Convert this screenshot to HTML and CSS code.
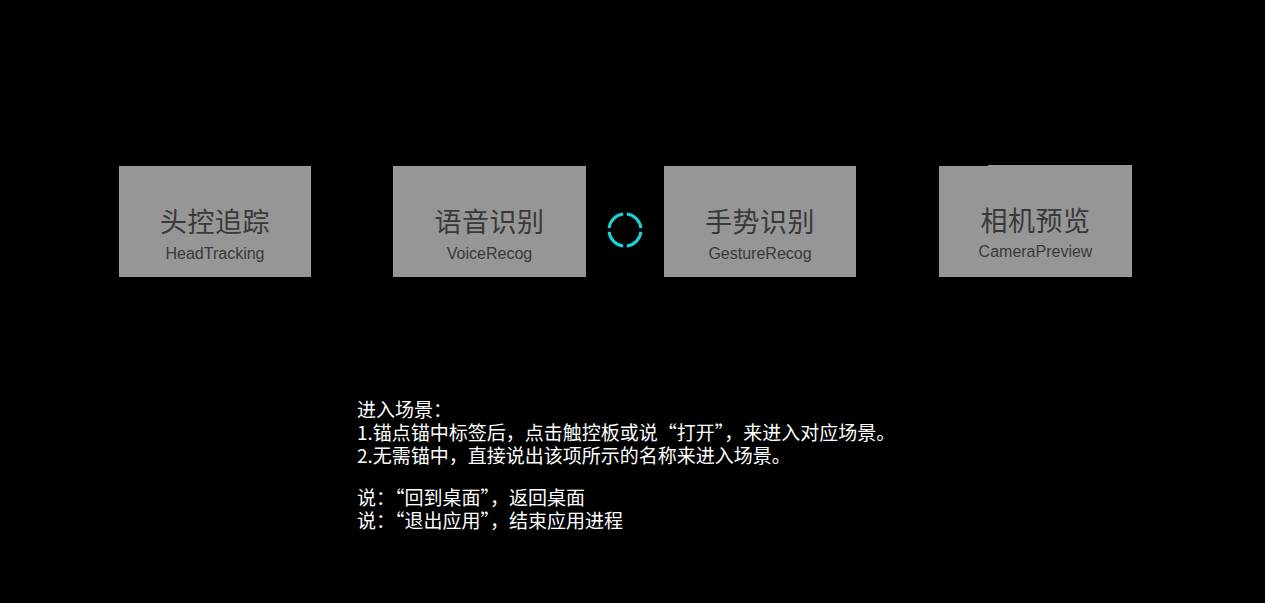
FILE: index.html
```html
<!DOCTYPE html>
<html lang="zh-CN">
<head>
<meta charset="utf-8">
<title>Scenes</title>
<link rel="stylesheet" href="styles.css">
</head>
<body>
<main class="stage">
  <section class="cards">
    <div class="card card-1">
      <div class="card-title">头控追踪</div>
      <div class="card-sub">HeadTracking</div>
    </div>
    <div class="card card-2">
      <div class="card-title">语音识别</div>
      <div class="card-sub">VoiceRecog</div>
    </div>
    <div class="card card-3">
      <div class="card-title">手势识别</div>
      <div class="card-sub">GestureRecog</div>
    </div>
    <div class="card card-4">
      <div class="card-title">相机预览</div>
      <div class="card-sub">CameraPreview</div>
    </div>
  </section>

  <svg class="reticle" width="36" height="36" viewBox="0 0 36 36" aria-hidden="true">
    <g fill="none" stroke="#1ad2d8" stroke-width="3">
      <path d="M19.8 2.1 A16 16 0 0 1 33.9 16.2"/>
      <path d="M33.9 19.8 A16 16 0 0 1 19.8 33.9"/>
      <path d="M16.2 33.9 A16 16 0 0 1 2.1 19.8"/>
      <path d="M2.1 16.2 A16 16 0 0 1 16.2 2.1"/>
    </g>
  </svg>

  <section class="help">
    <p>进入场景：</p>
    <p>1.锚点锚中标签后，点击触控板或说“打开”，来进入对应场景。</p>
    <p>2.无需锚中，直接说出该项所示的名称来进入场景。</p>
    <div class="blank"></div>
    <p>说：“回到桌面”，返回桌面</p>
    <p>说：“退出应用”，结束应用进程</p>
  </section>
</main>
</body>
</html>
```

FILE: styles.css
```css
html, body {
  margin: 0;
  padding: 0;
  background: #000;
}

body {
  width: 1265px;
  height: 603px;
  overflow: hidden;
  font-family: "Liberation Sans", "Noto Sans CJK SC", sans-serif;
}

.stage {
  position: relative;
  width: 1265px;
  height: 603px;
  padding-top: 166px;
  box-sizing: border-box;
}

.cards {
  display: grid;
  grid-template-columns: 192px 82px 193px 78px 192px 83px 193px;
  align-items: start;
  padding-left: 119px;
}

.card-1 { grid-column: 1; }
.card-2 { grid-column: 3; }
.card-3 { grid-column: 5; }
.card-4 { grid-column: 7; }

.card {
  height: 111px;
  background: #969696;
  color: #393939;
  display: flex;
  flex-direction: column;
  align-items: center;
  box-sizing: border-box;
  padding-top: 38px;
}

.card-4 {
  margin-top: -1px;
  height: 112px;
  padding-top: 38px;
  background:
    linear-gradient(to right, #000 49px, #969696 49px) top left / 100% 1px no-repeat,
    #969696;
}

.card-title {
  font-family: "Noto Sans CJK SC", sans-serif;
  font-size: 27px;
  line-height: 34px;
  height: 34px;
  letter-spacing: 0.5px;
}

.card-sub {
  font-size: 16px;
  line-height: 20px;
  margin-top: 6px;
}

.card-4 .card-sub {
  margin-top: 5px;
}

.reticle {
  position: absolute;
  left: 607px;
  top: 212px;
}

.help {
  margin: 120px 0 0 357px;
  color: #fff;
  font-family: "Noto Sans CJK KR", "Noto Sans CJK SC", sans-serif;
  font-size: 19px;
  line-height: 23px;
}

.help p {
  margin: 0;
  white-space: nowrap;
}

.help .blank {
  height: 19px;
}
```
